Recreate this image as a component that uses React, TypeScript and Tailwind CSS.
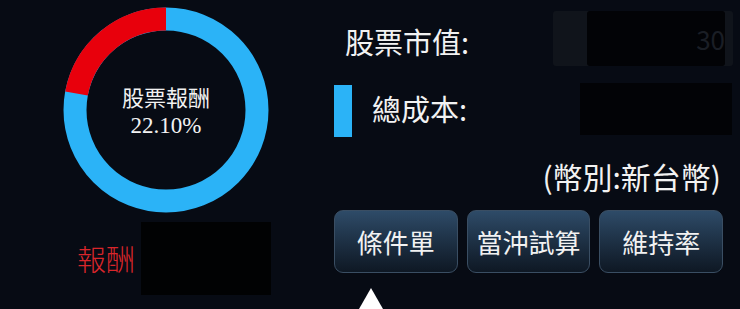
import React from 'react';

const CJK = { fontFamily: '"Noto Sans CJK TC", "Noto Sans CJK SC", sans-serif' };
const SERIF = { fontFamily: '"Liberation Serif", "DejaVu Serif", serif' };

// donut geometry (viewBox 210x210)
const C = 105;
const R = 91;
const RATIO = 0.221;

const arcEnd = () => {
  const a = RATIO * Math.PI * 2;
  return { x: C - R * Math.sin(a), y: C - R * Math.cos(a) };
};

const Donut: React.FC = () => {
  const end = arcEnd();
  return (
    <div className="relative w-[210px] h-[210px]">
      <svg width="210" height="210" viewBox="0 0 210 210">
        <circle cx={C} cy={C} r={R} fill="none" stroke="#2bb3f7" strokeWidth="23" />
        <path
          d={`M ${C} ${C - R} A ${R} ${R} 0 0 0 ${end.x} ${end.y}`}
          fill="none"
          stroke="#e8000c"
          strokeWidth="23"
        />
      </svg>
      <div className="absolute inset-0 flex flex-col items-center justify-center pt-[2px] text-[#f2f2f2]">
        <div className="text-[22px] leading-[29px]" style={CJK}>股票報酬</div>
        <div className="text-[23px] leading-[29px]" style={SERIF}>22.10%</div>
      </div>
    </div>
  );
};

const Redacted: React.FC<{ w: number; h: number; hint: string; faded?: boolean }> = ({ w, h, hint, faded }) => (
  <div
    className={`flex items-center justify-end rounded-[3px] pr-[8px] ${faded ? 'bg-[#10141b] pl-[34px]' : 'bg-[#020306]'}`}
    style={{ width: w, height: h }}
  >
    <div className="flex h-full flex-1 items-center justify-end rounded-[3px] bg-[#020306]">
      <span className="text-[26px] text-[#1a1e25]" style={CJK}>{hint}</span>
    </div>
  </div>
);

const App: React.FC = () => {
  return (
    <div className="flex w-[740px] h-[309px] overflow-hidden bg-[#070b14] text-[#f2f2f2]">
      {/* left: donut + return */}
      <div className="flex w-[334px] flex-col pl-[61px] pt-[5px]">
        <Donut />
        <div className="mt-[7px] flex h-[73px] items-center pl-[16px]">
          <span className="w-[64px] text-[29px] font-light leading-none text-[#d9262b]" style={CJK}>報酬</span>
          <div className="h-[73px] w-[130px] bg-[#010203]" />
        </div>
      </div>

      {/* right: values, currency, actions */}
      <div className="flex w-[389px] flex-col pt-[8px]">
        <div className="flex h-[68px] items-center justify-between">
          <span className="pl-[11px] text-[29px] leading-none" style={CJK}>股票市值:</span>
          <div className="-mr-[10px] -mt-[6px]">
            <Redacted w={180} h={55} hint="30" faded />
          </div>
        </div>
        <div className="flex h-[68px] items-center">
          <div className="mt-[4px] h-[52px] w-[18px] bg-[#2bb3f7]" />
          <span className="pl-[20px] text-[29px] leading-none" style={CJK}>總成本:</span>
          <div className="-mr-[9px] ml-auto">
            <div className="h-[52px] w-[152px] bg-[#020306]" />
          </div>
        </div>
        <div className="flex h-[68px] items-center justify-end pr-[2px]">
          <span className="text-[30px] leading-none" style={CJK}>(幣別:新台幣)</span>
        </div>
        <div className="grid h-[64px] grid-cols-3 gap-[9px]">
          {['條件單', '當沖試算', '維持率'].map((label) => (
            <button
              key={label}
              className="flex items-center justify-center rounded-[9px] border border-[#3a4e63] bg-gradient-to-b from-[#2e4b68] to-[#0e1824] text-[26px] text-[#f2f2f2]"
              style={CJK}
            >
              {label}
            </button>
          ))}
        </div>
        <svg className="ml-[25px] mt-[15px] shrink-0" width="24" height="21" viewBox="0 0 24 21">
          <polygon points="12,0 24,21 0,21" fill="#ffffff" />
        </svg>
      </div>
    </div>
  );
};

export default App;
